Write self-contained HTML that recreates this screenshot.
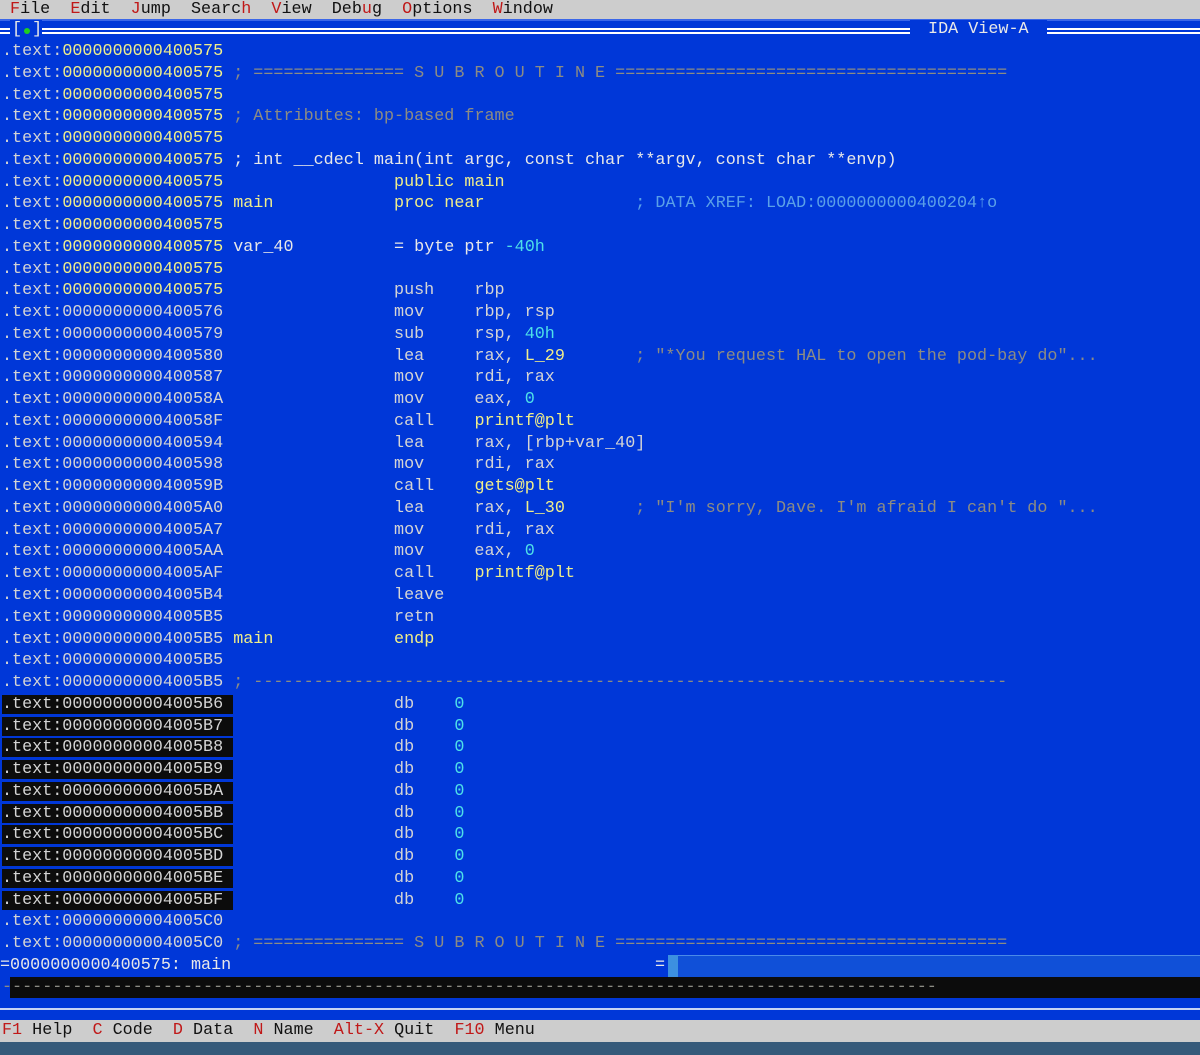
<!DOCTYPE html>
<html><head><meta charset="utf-8"><style>
*{margin:0;padding:0}
body{width:1200px;height:1055px;overflow:hidden;background:#0037d8;position:relative;font-family:"Liberation Mono","DejaVu Sans Mono",monospace;font-size:16.75px}
.r{position:absolute;left:2px;height:21.76px;line-height:21.76px;white-space:pre;color:#d4d4d4}
.y{color:#f0ee8a}.g{color:#8c8c84}.c{color:#4ee0e8}.b{color:#5aa0e8}.w{color:#e8e8e8}
.hl{background:#0c0c0c}
#menu{position:absolute;left:0;top:0;width:1200px;height:19px;background:#cdcdcd;line-height:19px;color:#111;white-space:pre}
#menu b,#foot b{font-weight:normal;color:#c01818}
</style></head><body>
<div id="menu" style="left:0;padding-left:10px;box-sizing:border-box"><b>F</b>ile  <b>E</b>dit  <b>J</b>ump  Searc<b>h</b>  <b>V</b>iew  Deb<b>u</b>g  <b>O</b>ptions  <b>W</b>indow</div>
<div style="position:absolute;top:19px;left:0;width:1200px;height:2px;background:#3a66e8"></div>
<div style="position:absolute;top:28px;left:0;width:1200px;height:1.5px;background:#fff"></div>
<div style="position:absolute;top:32px;left:0;width:1200px;height:1.5px;background:#fff"></div>
<div style="position:absolute;top:20px;left:10px;width:32px;height:20px;background:#0037d8"></div>
<div class="r w" style="top:20px;left:12px;height:20px;line-height:20px">[ ]</div>
<div style="position:absolute;top:28px;left:24px;width:6px;height:6px;border-radius:3px;background:#20d020"></div>
<div class="r w" style="top:20px;left:910px;height:20px;line-height:20px;background:#0037d8;padding:0 8px"> IDA View-A </div>

<div class="r" style="top:41px">.text:<span class="y">0000000000400575</span></div>
<div class="r" style="top:62.76px">.text:<span class="y">0000000000400575</span> <span class="g">; =============== S U B R O U T I N E =======================================</span></div>
<div class="r" style="top:84.52px">.text:<span class="y">0000000000400575</span></div>
<div class="r" style="top:106.28px">.text:<span class="y">0000000000400575</span> <span class="g">; Attributes: bp-based frame</span></div>
<div class="r" style="top:128.04px">.text:<span class="y">0000000000400575</span></div>
<div class="r" style="top:149.8px">.text:<span class="y">0000000000400575</span> <span class="w">; int __cdecl main(int argc, const char **argv, const char **envp)</span></div>
<div class="r" style="top:171.56px">.text:<span class="y">0000000000400575</span>                 <span class="y">public main</span></div>
<div class="r" style="top:193.32px">.text:<span class="y">0000000000400575</span> <span class="y">main</span>            <span class="y">proc near</span>               <span class="b">; DATA XREF: LOAD:0000000000400204↑o</span></div>
<div class="r" style="top:215.08px">.text:<span class="y">0000000000400575</span></div>
<div class="r" style="top:236.84px">.text:<span class="y">0000000000400575</span> <span class="w">var_40</span>          <span class="w">= byte ptr </span><span class="c">-40h</span></div>
<div class="r" style="top:258.6px">.text:<span class="y">0000000000400575</span></div>
<div class="r" style="top:280.36px">.text:<span class="y">0000000000400575</span>                 push    rbp</div>
<div class="r" style="top:302.12px">.text:0000000000400576                 mov     rbp, rsp</div>
<div class="r" style="top:323.88px">.text:0000000000400579                 sub     rsp, <span class="c">40h</span></div>
<div class="r" style="top:345.64px">.text:0000000000400580                 lea     rax, <span class="y">L_29</span>       <span class="g">; "*You request HAL to open the pod-bay do"...</span></div>
<div class="r" style="top:367.4px">.text:0000000000400587                 mov     rdi, rax</div>
<div class="r" style="top:389.16px">.text:000000000040058A                 mov     eax, <span class="c">0</span></div>
<div class="r" style="top:410.92px">.text:000000000040058F                 call    <span class="y">printf@plt</span></div>
<div class="r" style="top:432.68px">.text:0000000000400594                 lea     rax, [rbp+var_40]</div>
<div class="r" style="top:454.44px">.text:0000000000400598                 mov     rdi, rax</div>
<div class="r" style="top:476.2px">.text:000000000040059B                 call    <span class="y">gets@plt</span></div>
<div class="r" style="top:497.96px">.text:00000000004005A0                 lea     rax, <span class="y">L_30</span>       <span class="g">; "I'm sorry, Dave. I'm afraid I can't do "...</span></div>
<div class="r" style="top:519.72px">.text:00000000004005A7                 mov     rdi, rax</div>
<div class="r" style="top:541.48px">.text:00000000004005AA                 mov     eax, <span class="c">0</span></div>
<div class="r" style="top:563.24px">.text:00000000004005AF                 call    <span class="y">printf@plt</span></div>
<div class="r" style="top:585px">.text:00000000004005B4                 leave</div>
<div class="r" style="top:606.76px">.text:00000000004005B5                 retn</div>
<div class="r" style="top:628.52px">.text:00000000004005B5 <span class="y">main</span>            <span class="y">endp</span></div>
<div class="r" style="top:650.28px">.text:00000000004005B5</div>
<div class="r" style="top:672.04px">.text:00000000004005B5 <span class="g">; ---------------------------------------------------------------------------</span></div>
<div class="r" style="top:693.8px"><span class="hl">.text:00000000004005B6 </span>                db    <span class="c">0</span></div>
<div class="r" style="top:715.56px"><span class="hl">.text:00000000004005B7 </span>                db    <span class="c">0</span></div>
<div class="r" style="top:737.32px"><span class="hl">.text:00000000004005B8 </span>                db    <span class="c">0</span></div>
<div class="r" style="top:759.08px"><span class="hl">.text:00000000004005B9 </span>                db    <span class="c">0</span></div>
<div class="r" style="top:780.84px"><span class="hl">.text:00000000004005BA </span>                db    <span class="c">0</span></div>
<div class="r" style="top:802.6px"><span class="hl">.text:00000000004005BB </span>                db    <span class="c">0</span></div>
<div class="r" style="top:824.36px"><span class="hl">.text:00000000004005BC </span>                db    <span class="c">0</span></div>
<div class="r" style="top:846.12px"><span class="hl">.text:00000000004005BD </span>                db    <span class="c">0</span></div>
<div class="r" style="top:867.88px"><span class="hl">.text:00000000004005BE </span>                db    <span class="c">0</span></div>
<div class="r" style="top:889.64px"><span class="hl">.text:00000000004005BF </span>                db    <span class="c">0</span></div>
<div class="r" style="top:911.4px">.text:00000000004005C0</div>
<div class="r" style="top:933.16px">.text:00000000004005C0 <span class="g">; =============== S U B R O U T I N E =======================================</span></div>

<div class="r w" style="top:955px;left:0">=0000000000400575: main</div>
<div class="r w" style="top:955px;left:655px">=</div>
<div style="position:absolute;top:955px;left:668px;width:532px;height:21px;background:#1050d8;border-top:1px solid #4a8ae8"></div>
<div style="position:absolute;top:955px;left:668px;width:10px;height:22px;background:#3c90e0"></div>
<div style="position:absolute;top:977px;left:0;width:1200px;height:22px;background:#0037d8"></div>
<div style="position:absolute;top:977px;left:10px;width:1190px;height:21px;background:#0c0c0c"></div>
<div class="r g" style="top:977px;left:2px">---------------------------------------------------------------------------------------------</div>
<div style="position:absolute;top:1008px;left:0;width:1200px;height:2px;background:#c8d4f4"></div>
<div id="foot" style="position:absolute;top:1020px;left:0;width:1200px;height:22px;background:#cdcdcd;line-height:22px;white-space:pre;color:#111;padding-left:2px;box-sizing:border-box"><b>F1</b> Help  <b>C</b> Code  <b>D</b> Data  <b>N</b> Name  <b>Alt-X</b> Quit  <b>F10</b> Menu</div>
<div style="position:absolute;top:1042px;left:0;width:1200px;height:13px;background:#365a7a"></div>
</body></html>
